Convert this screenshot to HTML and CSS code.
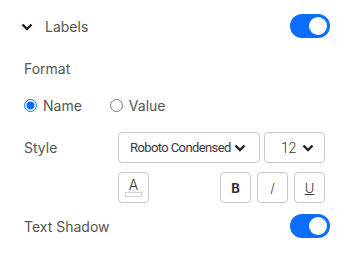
FILE: index.html
```html
<!DOCTYPE html>
<html lang="en">
    <head>
        <meta charset="UTF-8">
        <meta name="viewport" content="width=device-width, initial-scale=1.0">
        <title>Labels</title>
        <link rel="stylesheet" href="styles.css">
    </head>
    <body>
        <main class="panel">
            <div class="row head">
                <span class="head-title">
                    <svg class="chev" width="12" height="8" viewBox="0 0 12 8"><path d="M1.5 1.5 L6 6 L10.5 1.5" fill="none" stroke="#222" stroke-width="2.4"/></svg>
                    Labels
                </span>
                <span class="switch on"><span class="knob"></span></span>
            </div>

            <div class="row label-row">Format</div>

            <div class="row radios">
                <label class="radio"><span class="dot checked"></span>Name</label>
                <label class="radio"><span class="dot"></span>Value</label>
            </div>

            <div class="row style-row">
                <span class="style-label">Style</span>
                <div class="select font-select">
                    <span class="font-name">Roboto Condensed</span>
                    <svg width="12" height="8" viewBox="0 0 12 8"><path d="M1.5 1.5 L6 6 L10.5 1.5" fill="none" stroke="#222" stroke-width="2.4"/></svg>
                </div>
                <div class="select size-select">
                    <span class="size">12</span>
                    <svg width="12" height="8" viewBox="0 0 12 8"><path d="M1.5 1.5 L6 6 L10.5 1.5" fill="none" stroke="#222" stroke-width="2.4"/></svg>
                </div>
            </div>

            <div class="row tools">
                <button class="tool color-tool">
                    <span class="a">A</span>
                    <span class="swatch"></span>
                </button>
                <div class="fmt">
                    <button class="tool bold">B</button>
                    <button class="tool italic">/</button>
                    <button class="tool under">U</button>
                </div>
            </div>

            <div class="row head shadow">
                <span>Text Shadow</span>
                <span class="switch on"><span class="knob"></span></span>
            </div>
        </main>
    </body>
</html>
```

FILE: styles.css
```css
:root{
    --blue:#0d6efd;
    --text:#555555;
    --line:#c8c8c8;
}
*,*::before,*::after{
    padding: 0;
    margin: 0;
    box-sizing: border-box;
}
body{
    background: #ffffff;
    font-family: "Inter", "Noto Sans", sans-serif;
    font-size: 14px;
    color: var(--text);
}
.panel{
    padding: 14px 14px 0 24px;
}
.row{
    display: flex;
    align-items: center;
}
.head{
    justify-content: space-between;
    height: 24px;
}
.head-title{
    display: flex;
    align-items: center;
    margin-left: -3px;
}
.chev{
    margin-right: 12px;
    margin-top: 2px;
}
.switch{
    width: 40px;
    height: 24px;
    border-radius: 12px;
    background: var(--blue);
    display: flex;
    align-items: center;
    justify-content: flex-end;
    padding: 3px;
}
.knob{
    width: 18px;
    height: 18px;
    border-radius: 50%;
    background: #ffffff;
}
.label-row{
    height: 20px;
    margin-top: 20px;
}
.radios{
    height: 20px;
    margin-top: 17px;
    gap: 28px;
}
.radio{
    display: flex;
    align-items: center;
}
.dot{
    width: 13px;
    height: 13px;
    border-radius: 50%;
    border: 1px solid #777;
    margin-right: 6px;
}
.dot.checked{
    border: 1px solid var(--blue);
    background: radial-gradient(circle, var(--blue) 0 3.6px, #ffffff 4.4px);
}
.style-row{
    margin-top: 17px;
    height: 31px;
}
.style-label{
    width: 94px;
}
.select{
    height: 31px;
    border: 1px solid var(--line);
    border-radius: 4px;
    display: flex;
    align-items: center;
    color: #333;
}
.font-select{
    width: 142px;
    padding: 0 13px 0 11px;
    justify-content: space-between;
}
.font-name{
    font-family: "Roboto", sans-serif;
    font-size: 13px;
    letter-spacing: -0.6px;
    color: #3a3a3a;
}
.size-select{
    width: 61px;
    margin-left: 4px;
    padding: 0 10px 0 16px;
    justify-content: space-between;
}
.size{
    font-family: "Roboto", sans-serif;
    font-size: 14px;
    font-weight: 300;
    letter-spacing: -0.3px;
}
.tools{
    margin-top: 9px;
    height: 31px;
    margin-left: 94px;
    margin-right: 5px;
    justify-content: space-between;
}
.fmt{
    display: flex;
    gap: 6px;
}
.tool{
    width: 31px;
    height: 31px;
    border: 1px solid var(--line);
    border-radius: 4px;
    background: #ffffff;
    font-family: "Inter", sans-serif;
    color: #333;
    font-size: 13px;
}
.color-tool{
    display: flex;
    flex-direction: column;
    align-items: center;
    justify-content: center;
}
.color-tool .a{
    font-size: 14px;
    font-weight: 300;
    line-height: 13px;
}
.swatch{
    width: 17px;
    height: 5px;
    border: 1px solid #d0d0d0;
    margin-top: 1px;
}
.bold{
    font-weight: 700;
}
.italic{
    font-weight: 300;
}
.under{
    text-decoration: underline;
    font-weight: 300;
}
.shadow{
    margin-top: 11px;
}
```
